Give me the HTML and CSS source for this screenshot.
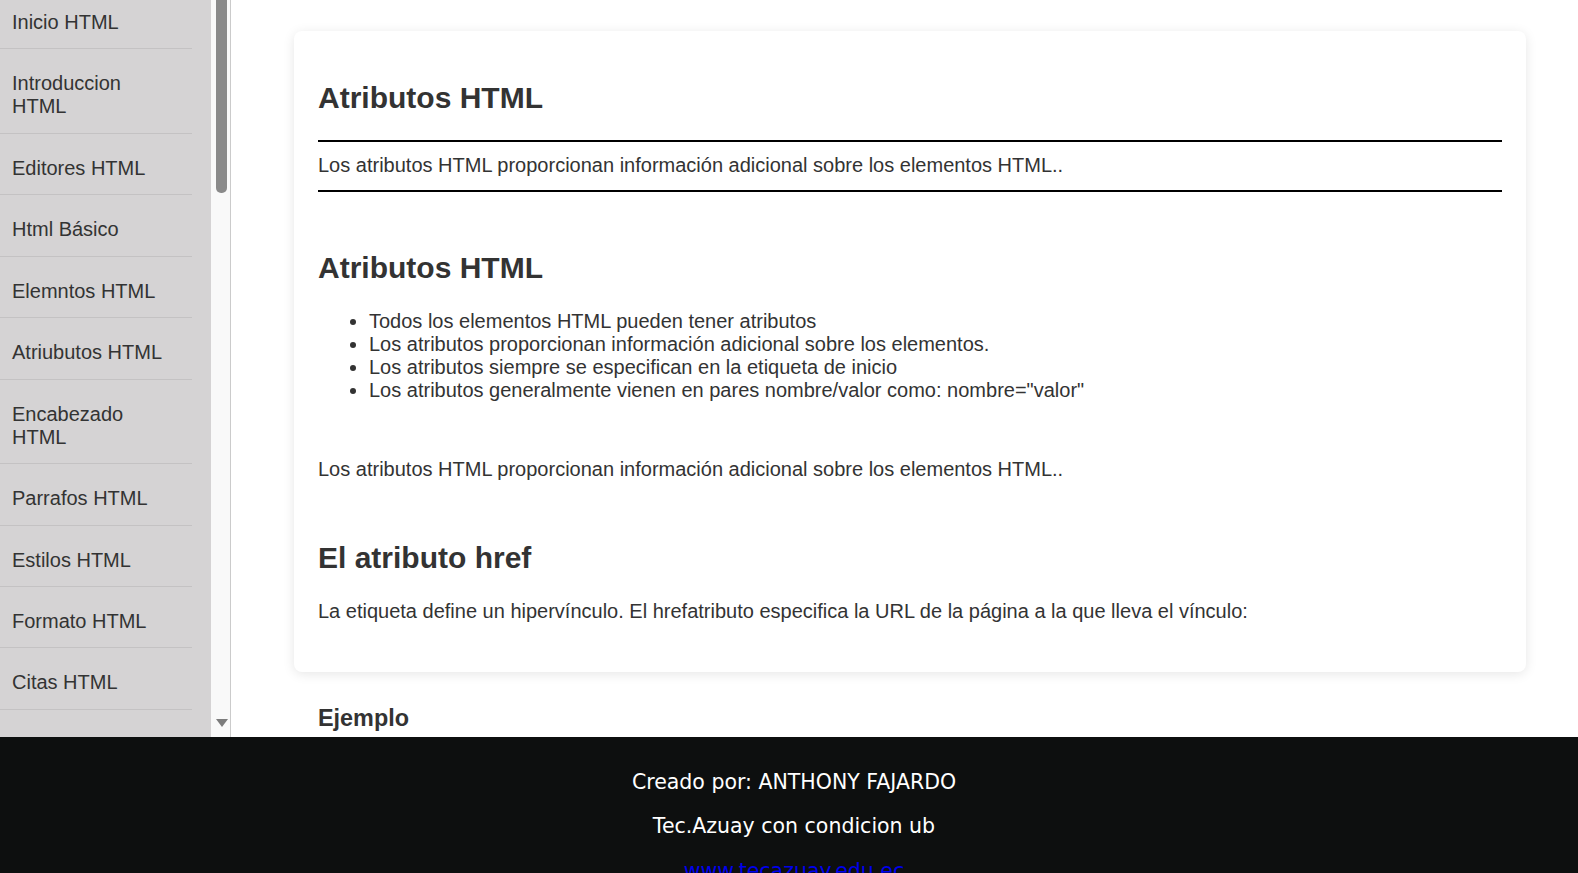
FILE: index.html
```html
<!DOCTYPE html>
<html lang="es">
<head>
<meta charset="utf-8">
<title>Atributos HTML</title>
<link rel="stylesheet" href="styles.css">
</head>
<body>
<div class="page">
  <div class="top">
    <aside class="sidebar">
      <nav class="menu">
        <a class="item first" href="#">Inicio HTML</a>
        <a class="item" href="#">Introduccion HTML</a>
        <a class="item" href="#">Editores HTML</a>
        <a class="item" href="#">Html Básico</a>
        <a class="item" href="#">Elemntos HTML</a>
        <a class="item" href="#">Atriubutos HTML</a>
        <a class="item" href="#">Encabezado HTML</a>
        <a class="item" href="#">Parrafos HTML</a>
        <a class="item" href="#">Estilos HTML</a>
        <a class="item" href="#">Formato HTML</a>
        <a class="item" href="#">Citas HTML</a>
      </nav>
      <div class="scrollbar">
        <div class="thumb"></div>
        <div class="track-space"></div>
        <div class="arrow-down"></div>
      </div>
    </aside>
    <main class="main">
      <section class="card">
        <h2 class="h-first">Atributos HTML</h2>
        <div class="intro">
          <p>Los atributos HTML proporcionan información adicional sobre los elementos HTML..</p>
        </div>
        <h2 class="h-second">Atributos HTML</h2>
        <ul class="list">
          <li>Todos los elementos HTML pueden tener atributos</li>
          <li>Los atributos proporcionan información adicional sobre los elementos.</li>
          <li>Los atributos siempre se especifican en la etiqueta de inicio</li>
          <li>Los atributos generalmente vienen en pares nombre/valor como: nombre="valor"</li>
        </ul>
        <p class="p-after-list">Los atributos HTML proporcionan información adicional sobre los elementos HTML..</p>
        <h2 class="h-third">El atributo href</h2>
        <p class="p-last">La etiqueta define un hipervínculo. El hrefatributo especifica la URL de la página a la que lleva el vínculo:</p>
      </section>
      <h3 class="example">Ejemplo</h3>
    </main>
  </div>
  <footer class="footer">
    <p>Creado por: ANTHONY FAJARDO</p>
    <p>Tec.Azuay con condicion ub</p>
    <p class="link-line"><a class="footer-link" href="#">www.tecazuay.edu.ec</a></p>
  </footer>
</div>
</body>
</html>
```

FILE: styles.css
```css
html, body {
  margin: 0;
  padding: 0;
  height: 100%;
}

body {
  font-family: "Liberation Sans", Arial, sans-serif;
  font-size: 20px;
  color: #333;
  background: #fff;
  overflow: hidden;
}

.page {
  height: 100vh;
  display: grid;
  grid-template-rows: 737px 1fr;
}

.top {
  display: flex;
  min-height: 0;
  overflow: hidden;
}

/* Sidebar */
.sidebar {
  display: flex;
  width: 230px;
  flex: 0 0 230px;
  border-right: 1px solid #cbcbcb;
  overflow: hidden;
}

.menu {
  width: 211px;
  flex: 0 0 211px;
  background: #d5d3d4;
  display: flex;
  flex-direction: column;
  overflow: hidden;
  padding-right: 19px;
  box-sizing: border-box;
}

.item {
  display: block;
  color: #333;
  text-decoration: none;
  line-height: 23px;
  padding: 23px 20px 14.45px 12px;
  border-bottom: 1px solid #c4c2c3;
  flex: 0 0 auto;
}

.item.first {
  padding-top: 11px;
}

.scrollbar {
  width: 19px;
  flex: 0 0 19px;
  background: #f9f9f9;
  display: flex;
  flex-direction: column;
  align-items: center;
}

.thumb {
  width: 11px;
  height: 197px;
  margin-top: -4px;
  margin-left: 2px;
  background: #8a8a8a;
  border-radius: 5px;
  flex: 0 0 auto;
}

.track-space {
  flex: 1;
}

.arrow-down {
  width: 0;
  height: 0;
  margin-left: 2px;
  border-left: 6px solid transparent;
  border-right: 6px solid transparent;
  border-top: 8px solid #7c7c7c;
  margin-bottom: 10px;
}

/* Main */
.main {
  flex: 1;
  min-width: 0;
  padding: 31px 52px 0 63px;
  overflow: hidden;
}

.card {
  background: #fff;
  border-radius: 8px;
  box-shadow: 0 2px 12px rgba(0, 0, 0, 0.10);
  padding: 25px 24px 49px;
}

.card h2 {
  font-size: 30px;
  font-weight: bold;
  line-height: 34.5px;
  margin: 0;
  color: #333;
}

.h-first {
  margin-top: 25px !important;
  margin-bottom: 24px !important;
}

.intro {
  border-top: 2px solid #000;
  border-bottom: 2px solid #000;
  padding: 12px 0 13px;
}

.intro p {
  margin: 0;
  line-height: 23px;
}

.h-second {
  margin-top: 59px !important;
}

.list {
  margin: 25px 0 0;
  padding-left: 51px;
  line-height: 23px;
}

.p-after-list {
  margin: 56px 0 0;
  line-height: 23px;
}

.h-third {
  margin-top: 60px !important;
}

.p-last {
  margin: 24px 0 0;
  line-height: 23px;
}

.example {
  font-size: 23.4px;
  font-weight: bold;
  line-height: 27px;
  margin: 33px 0 0 24px;
  color: #333;
}

/* Footer */
.footer {
  background: #0d0f0f;
  color: #fff;
  text-align: center;
  font-family: "DejaVu Sans", Verdana, sans-serif;
  font-size: 20.5px;
  line-height: 24px;
  padding: 13px 0 0 10px;
  overflow: hidden;
}

.footer p {
  margin: 20.5px 0;
}

.footer p:first-child {
  margin-top: 19.5px;
}

.footer .link-line {
  margin-bottom: 0;
}

.footer-link {
  color: #0000ee;
  text-decoration: none;
}
```
